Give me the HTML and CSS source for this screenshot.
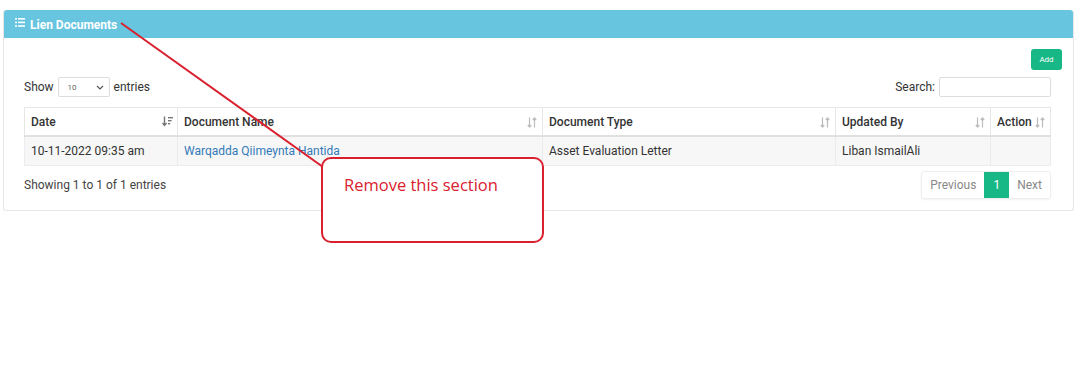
FILE: index.html
```html
<!DOCTYPE html>
<html lang="en">
<head>
    <meta charset="UTF-8">
    <title>Lien Documents</title>
    <link rel="stylesheet" href="styles.css">
</head>
<body>

    <div class="panel">
        <div class="panel-heading">
            <svg class="list-icon" width="10" height="9" viewBox="0 0 10 9">
                <rect x="0" y="0" width="2" height="1.6" fill="#fff"/>
                <rect x="3" y="0" width="7" height="1.6" fill="#fff"/>
                <rect x="0" y="3.6" width="2" height="1.6" fill="#fff"/>
                <rect x="3" y="3.6" width="7" height="1.6" fill="#fff"/>
                <rect x="0" y="7.2" width="2" height="1.6" fill="#fff"/>
                <rect x="3" y="7.2" width="7" height="1.6" fill="#fff"/>
            </svg>
            Lien Documents
        </div>
        <div class="panel-body">
            <div class="add-row">
                <button class="btn-add">Add</button>
            </div>
            <div class="dt-wrap">
                <div class="dt-top">
                    <label class="length">Show
                        <span class="select">10
                            <svg width="8" height="5" viewBox="0 0 8 5"><path d="M1 1 L4 4 L7 1" stroke="#555" stroke-width="1.2" fill="none"/></svg>
                        </span>
                        entries</label>
                    <label class="search">Search: <span class="search-input"></span></label>
                </div>
                <table class="dt">
                    <thead>
                        <tr>
                            <th class="c-date">Date
                                <svg class="sort active" width="11" height="11" viewBox="0 0 11 11">
                                    <path d="M2.5 0.5 V9 M0.5 7 L2.5 9.5 L4.5 7" stroke="#777" stroke-width="1.4" fill="none"/>
                                    <rect x="6" y="1" width="5" height="1.4" fill="#777"/>
                                    <rect x="6" y="4" width="3.6" height="1.4" fill="#777"/>
                                    <rect x="6" y="7" width="2.2" height="1.4" fill="#777"/>
                                </svg></th>
                            <th class="c-name">Document Name <svg class="sort" width="10" height="11" viewBox="0 0 10 11"><path d="M2.5 0.5 V10 M0.8 8 L2.5 10 L4.2 8 M7.5 10.5 V1 M5.8 3 L7.5 1 L9.2 3" stroke="#bbb" stroke-width="1.2" fill="none"/></svg></th>
                            <th class="c-type">Document Type <svg class="sort" width="10" height="11" viewBox="0 0 10 11"><path d="M2.5 0.5 V10 M0.8 8 L2.5 10 L4.2 8 M7.5 10.5 V1 M5.8 3 L7.5 1 L9.2 3" stroke="#bbb" stroke-width="1.2" fill="none"/></svg></th>
                            <th class="c-user">Updated By <svg class="sort" width="10" height="11" viewBox="0 0 10 11"><path d="M2.5 0.5 V10 M0.8 8 L2.5 10 L4.2 8 M7.5 10.5 V1 M5.8 3 L7.5 1 L9.2 3" stroke="#bbb" stroke-width="1.2" fill="none"/></svg></th>
                            <th class="c-action">Action <svg class="sort" width="10" height="11" viewBox="0 0 10 11"><path d="M2.5 0.5 V10 M0.8 8 L2.5 10 L4.2 8 M7.5 10.5 V1 M5.8 3 L7.5 1 L9.2 3" stroke="#bbb" stroke-width="1.2" fill="none"/></svg></th>
                        </tr>
                    </thead>
                    <tbody>
                        <tr>
                            <td>10-11-2022 09:35 am</td>
                            <td><a href="#">Warqadda Qiimeynta Hantida</a></td>
                            <td>Asset Evaluation Letter</td>
                            <td>Liban IsmailAli</td>
                            <td></td>
                        </tr>
                    </tbody>
                </table>
                <div class="dt-bottom">
                    <div class="info">Showing 1 to 1 of 1 entries</div>
                    <div class="pagination">
                        <span class="page">Previous</span>
                        <span class="page current">1</span>
                        <span class="page">Next</span>
                    </div>
                </div>
            </div>
        </div>
    </div>

    <svg class="callout-line" width="1080" height="380">
        <line x1="121" y1="23" x2="323" y2="167" stroke="#d9202e" stroke-width="2"/>
    </svg>
    <div class="callout">Remove this section</div>

</body>
</html>
```

FILE: styles.css
```css
body {
    margin: 0;
    font-family: Roboto, "Liberation Sans", sans-serif;
    font-size: 12px;
    color: #333;
    background-color: #fff;
}
.panel {
    margin: 10px 6px 0 3px;
    border: 1px solid #e6e6e6;
    border-top: none;
    border-radius: 3px;
}
.panel-heading {
    display: flex;
    align-items: center;
    gap: 5px;
    height: 28px;
    padding: 1px 11px 0;
    box-sizing: border-box;
    background-color: #67c5e0;
    color: #fff;
    font-weight: bold;
    font-size: 12px;
    border-radius: 3px 3px 0 0;
}
.list-icon {
    margin-top: -4px;
}
.panel-body {
    padding: 11px 11px 11px 20px;
}
.add-row {
    display: flex;
    justify-content: flex-end;
}
.btn-add {
    width: 31px;
    height: 21px;
    padding: 0;
    border: none;
    border-radius: 3px;
    background-color: #17b886;
    color: #fff;
    font-family: inherit;
    font-size: 8px;
    cursor: pointer;
}
.dt-wrap {
    margin-right: 11px;
}
.dt-top {
    display: flex;
    justify-content: space-between;
    align-items: center;
    margin-top: 7px;
    height: 20px;
}
.length, .search {
    display: flex;
    align-items: center;
    gap: 4px;
}
.select {
    display: flex;
    align-items: center;
    justify-content: space-between;
    box-sizing: border-box;
    width: 52px;
    height: 20px;
    padding: 0 5px 0 9px;
    border: 1px solid #ddd;
    border-radius: 2px;
    font-size: 8px;
    color: #666;
}
.search-input {
    display: block;
    box-sizing: border-box;
    width: 112px;
    height: 20px;
    border: 1px solid #ddd;
    border-radius: 2px;
}
.dt {
    width: 100%;
    margin-top: 10px;
    border-collapse: collapse;
    border: 1px solid #e6e6e6;
}
.dt th {
    position: relative;
    height: 27px;
    padding: 0 6px;
    text-align: left;
    font-weight: 500;
    border: 1px solid #e6e6e6;
    border-bottom: 2px solid #e0e0e0;
}
.dt td {
    height: 28px;
    padding: 0 6px;
    background-color: #f7f7f7;
    border: 1px solid #ececec;
}
.c-date { width: 140px; }
.c-name { width: 352px; }
.c-type { width: 280px; }
.c-user { width: 142px; }
.dt a {
    color: #337ab7;
    text-decoration: none;
}
.sort {
    position: absolute;
    right: 5px;
    top: 9px;
}
.sort.active {
    top: 8px;
    right: 4px;
}
.dt-bottom {
    display: flex;
    justify-content: space-between;
    align-items: center;
    margin-top: 5px;
}
.info {
    color: #444;
}
.pagination {
    display: flex;
    border: 1px solid #eee;
    border-radius: 3px;
    box-shadow: 0 1px 2px rgba(0, 0, 0, 0.05);
}
.page {
    display: flex;
    align-items: center;
    height: 26px;
    padding: 0 8px;
    color: #888;
}
.page.current {
    background-color: #17b886;
    color: #fff;
    padding: 0 9px;
}
.callout-line {
    position: absolute;
    left: 0;
    top: 0;
    pointer-events: none;
}
.callout {
    position: absolute;
    left: 321px;
    top: 157px;
    box-sizing: border-box;
    width: 223px;
    height: 86px;
    padding: 14px 0 0 21px;
    border: 2px solid #d9202e;
    border-radius: 10px;
    background-color: #fff;
    color: #d9202e;
    font-family: "Open Sans", "Liberation Sans", sans-serif;
    font-size: 16.5px;
}
```
